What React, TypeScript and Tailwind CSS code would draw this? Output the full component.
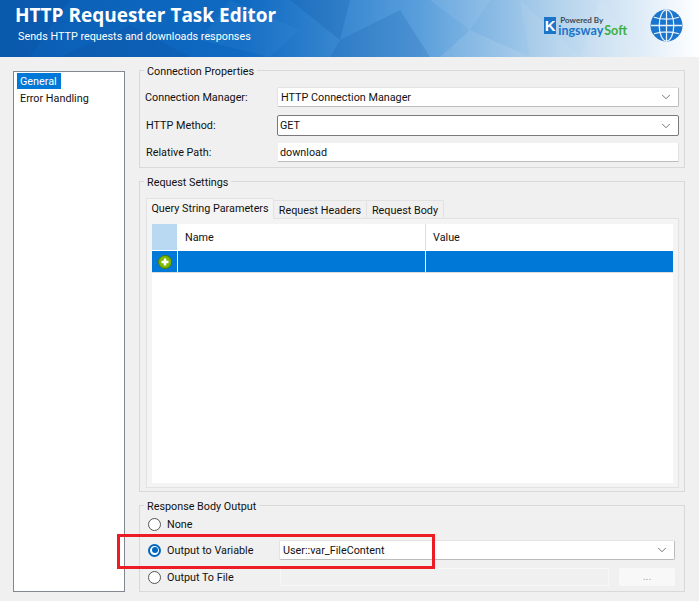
import { ChevronDown } from "lucide-react";
import type { ReactNode } from "react";

const Group = ({
  title,
  className,
  bodyClass,
  children,
}: {
  title: string;
  className: string;
  bodyClass: string;
  children: ReactNode;
}) => (
  <div className={`border border-[#d9d9d9] ${className}`}>
    <div className="-mt-[6px] ml-[4px] w-fit bg-[#f0f0f0] px-[3px] leading-[14px]">{title}</div>
    <div className={bodyClass}>{children}</div>
  </div>
);

const Combo = ({ value, dark, className }: { value: string; dark?: boolean; className: string }) => (
  <div
    className={`flex items-center justify-between rounded-[2px] bg-white pr-[5px] border ${
      dark ? "border-[#7a7a7a] pl-[2px]" : "border-[#e3e3e3] border-b-[#bcbcbc] border-r-[#bcbcbc] pl-[3px]"
    } ${className}`}
  >
    <span className="pt-[2px]">{value}</span>
    <ChevronDown size={14} strokeWidth={1.25} className="text-[#444]" />
  </div>
);

const Radio = ({ checked }: { checked?: boolean }) =>
  checked ? (
    <span className="flex h-[13px] w-[13px] shrink-0 items-center justify-center rounded-full border-2 border-[#0067c0] bg-white">
      <span className="h-[6px] w-[6px] rounded-full bg-[#0067c0]" />
    </span>
  ) : (
    <span className="h-[13px] w-[13px] shrink-0 rounded-full border border-[#555] bg-white" />
  );

const HeaderArt = () => (
  <svg className="absolute inset-0 h-full w-full" viewBox="0 0 699 57" preserveAspectRatio="none">
    <defs>
      <linearGradient id="hdr" x1="0" x2="1" y1="0" y2="0">
        <stop offset="0" stopColor="#0a5db3" />
        <stop offset="0.35" stopColor="#0f6ac2" />
        <stop offset="0.6" stopColor="#5a9fdc" />
        <stop offset="0.8" stopColor="#b4d3ec" />
        <stop offset="0.93" stopColor="#e4eff9" />
        <stop offset="1" stopColor="#ffffff" />
      </linearGradient>
    </defs>
    <rect width="699" height="57" fill="url(#hdr)" />
    <polygon points="0,0 70,0 30,57 0,57" fill="#0a4f9e" opacity="0.3" />
    <polygon points="60,57 130,25 190,57" fill="#0a4f9e" opacity="0.25" />
    <polygon points="230,0 300,30 270,57 200,40" fill="#3a8ad8" opacity="0.2" />
    <polygon points="290,0 350,0 340,40" fill="#0a4f9e" opacity="0.2" />
    <polygon points="340,40 400,10 430,57 330,57" fill="#0a55a8" opacity="0.18" />
    <polygon points="430,0 490,0 470,30" fill="#ffffff" opacity="0.07" />
    <polygon points="470,30 530,57 440,57" fill="#ffffff" opacity="0.1" />
    <polygon points="520,0 580,57 530,57" fill="#ffffff" opacity="0.07" />
    <polygon points="600,0 640,57 580,57" fill="#ffffff" opacity="0.08" />
  </svg>
);

const Globe = () => (
  <svg width="33" height="33" viewBox="0 0 34 34" className="shrink-0">
    <circle cx="17" cy="17" r="16.500" fill="#1a75cf" />
    <g fill="none" stroke="#e8f2fb" strokeWidth="1.3">
      <ellipse cx="17" cy="17" rx="7.500" ry="16" />
      <path d="M17 1v32M1 17h32M4 8.500c8 2.500 18 2.500 26 0M4 25.500c8-2.500 18-2.500 26 0" />
    </g>
  </svg>
);

const Logo = () => (
  <div className="mt-[7px] flex items-start">
    <div className="mt-[1px] flex h-[17px] w-[12px] items-center justify-center bg-[#1b75c9] font-['Liberation_Sans',sans-serif] text-[15px] font-bold leading-none text-white">
      K
    </div>
    <div className="ml-[2px] flex flex-col font-['Lato',sans-serif] font-bold leading-none">
      <span className="ml-[2px] text-[8px] leading-[8px] text-[#3c4a57]">Powered By</span>
      <span className="text-[12.5px] leading-[13px] text-[#1b75c9]">
        ingsway<span className="ml-[1px] text-[#3fae3c]">Soft</span>
      </span>
    </div>
  </div>
);

export default function App() {
  return (
    <div className="flex h-[601px] w-[699px] flex-col overflow-hidden bg-[#f0f0f0] font-['Roboto',sans-serif] text-[10.8px] text-[#111]">
      <header className="relative flex h-[57px] shrink-0 justify-between pl-[15px] pr-[16px] text-white">
        <HeaderArt />
        <div className="relative pt-[2px]">
          <div className="font-['Open_Sans',sans-serif] text-[19px] font-bold leading-[26px]">
            HTTP Requester Task Editor
          </div>
          <div className="ml-[3px] text-[10.8px] leading-[17px]">Sends HTTP requests and downloads responses</div>
        </div>
        <div className="relative flex items-start gap-[23px] pt-[9px]">
          <Logo />
          <Globe />
        </div>
      </header>

      <div className="flex flex-1 pb-[9px] pl-[13px] pr-[14px] pt-[13px]">
        <aside className="mr-[14px] mt-[1px] w-[112px] shrink-0 border border-[#828790] bg-white px-[3px] pt-[1px]">
          <div className="h-[16px] w-[44px] bg-[#0078d7] pl-[3px] pt-[1px] leading-[16px] text-white">General</div>
          <div className="h-[18px] pl-[3px] pt-[1px] leading-[18px]">Error Handling</div>
        </aside>

        <main className="flex min-w-0 flex-1 flex-col">
          <Group title="Connection Properties" className="h-[98px] shrink-0" bodyClass="pr-[5px]">
            <div className="mt-[8px] flex items-center pl-[5px]">
              <span className="w-[132px] pt-[2px]">Connection Manager:</span>
              <Combo value="HTTP Connection Manager" className="h-[20px] flex-1" />
            </div>
            <div className="mt-[8px] flex items-center pl-[6px]">
              <span className="w-[132px] pt-[2px]">HTTP Method:</span>
              <Combo value="GET" dark className="-ml-px h-[21px] flex-1" />
            </div>
            <div className="mt-[7px] flex items-center pl-[6px]">
              <span className="w-[132px] pt-[2px]">Relative Path:</span>
              <div className="flex h-[19px] flex-1 items-center border-b border-r border-b-[#bcbcbc] border-r-[#e3e3e3] bg-white pl-[2px] pt-[2px]">
                download
              </div>
            </div>
          </Group>

          <Group title="Request Settings" className="mt-[13px] h-[311px] shrink-0" bodyClass="pl-[6px] pr-[5px]">
            <div className="mt-[8px] flex items-end whitespace-nowrap">
              <div className="z-10 -mb-px flex h-[21px] w-[128px] items-center justify-center border border-b-0 border-[#e2e2e2] bg-[#f4f4f4]">
                Query String Parameters
              </div>
              <div className="flex h-[18px] w-[93px] items-center justify-center border border-b-0 border-l-0 border-[#e2e2e2] pt-[4px]">
                Request Headers
              </div>
              <div className="flex h-[18px] w-[77px] items-center justify-center border border-b-0 border-l-0 border-[#e2e2e2] pt-[4px]">
                Request Body
              </div>
            </div>
            <div className="h-[270px] border border-[#e2e2e2] bg-[#f4f4f4] p-[5px]">
              <div className="h-[259px] bg-white">
                <div className="grid h-[27px] grid-cols-[26px_248px_1fr] border-b border-white">
                  <div className="border-r border-white bg-[#b9d9f2]" />
                  <div className="flex items-center border-r border-[#dcdcdc] pl-[7px] pt-[2px]">Name</div>
                  <div className="flex items-center pl-[7px] pt-[2px]">Value</div>
                </div>
                <div className="grid h-[21px] grid-cols-[26px_248px_1fr] bg-[#0078d7]">
                  <div className="flex items-center justify-center border-r border-white">
                    <svg width="14" height="14" viewBox="0 0 14 14">
                      <circle cx="7" cy="7" r="6.500" fill="#7fb800" stroke="#4e7f00" />
                      <path d="M7 3.500v7M3.500 7h7" stroke="#fff" strokeWidth="2.500" />
                    </svg>
                  </div>
                  <div className="border-r border-white" />
                  <div />
                </div>
                <div className="h-px bg-[#dcdcdc]" />
              </div>
            </div>
          </Group>

          <Group title="Response Body Output" className="mt-[13px] h-[87px] shrink-0" bodyClass="pl-[8px] pr-[9px]">
            <div className="mt-[2px] flex h-[16px] items-center gap-[6px]">
              <Radio />
              <span className="pt-[2px]">None</span>
            </div>
            <div className="relative mt-[8px] flex h-[20px] items-center">
              <Radio checked />
              <span className="ml-[6px] w-[112px] pt-[2px]">Output to Variable</span>
              <Combo value="User::var_FileContent" className="h-[20px] flex-1" />
              <div className="absolute -left-[31px] -top-[6px] h-[35px] w-[318px] border-[3px] border-[#ed1c24]" />
            </div>
            <div className="mt-[8px] flex h-[18px] items-center">
              <Radio />
              <span className="ml-[6px] w-[113px] pt-[2px]">Output To File</span>
              <div className="h-[18px] w-[329px] border border-[#f7f7f7] bg-[#f0f0f0]" />
              <div className="ml-[10px] flex h-[18px] flex-1 items-center justify-center rounded-[2px] bg-[#f8f8f8] text-[#a0a0a0]">
                ...
              </div>
            </div>
          </Group>
        </main>
      </div>
    </div>
  );
}
